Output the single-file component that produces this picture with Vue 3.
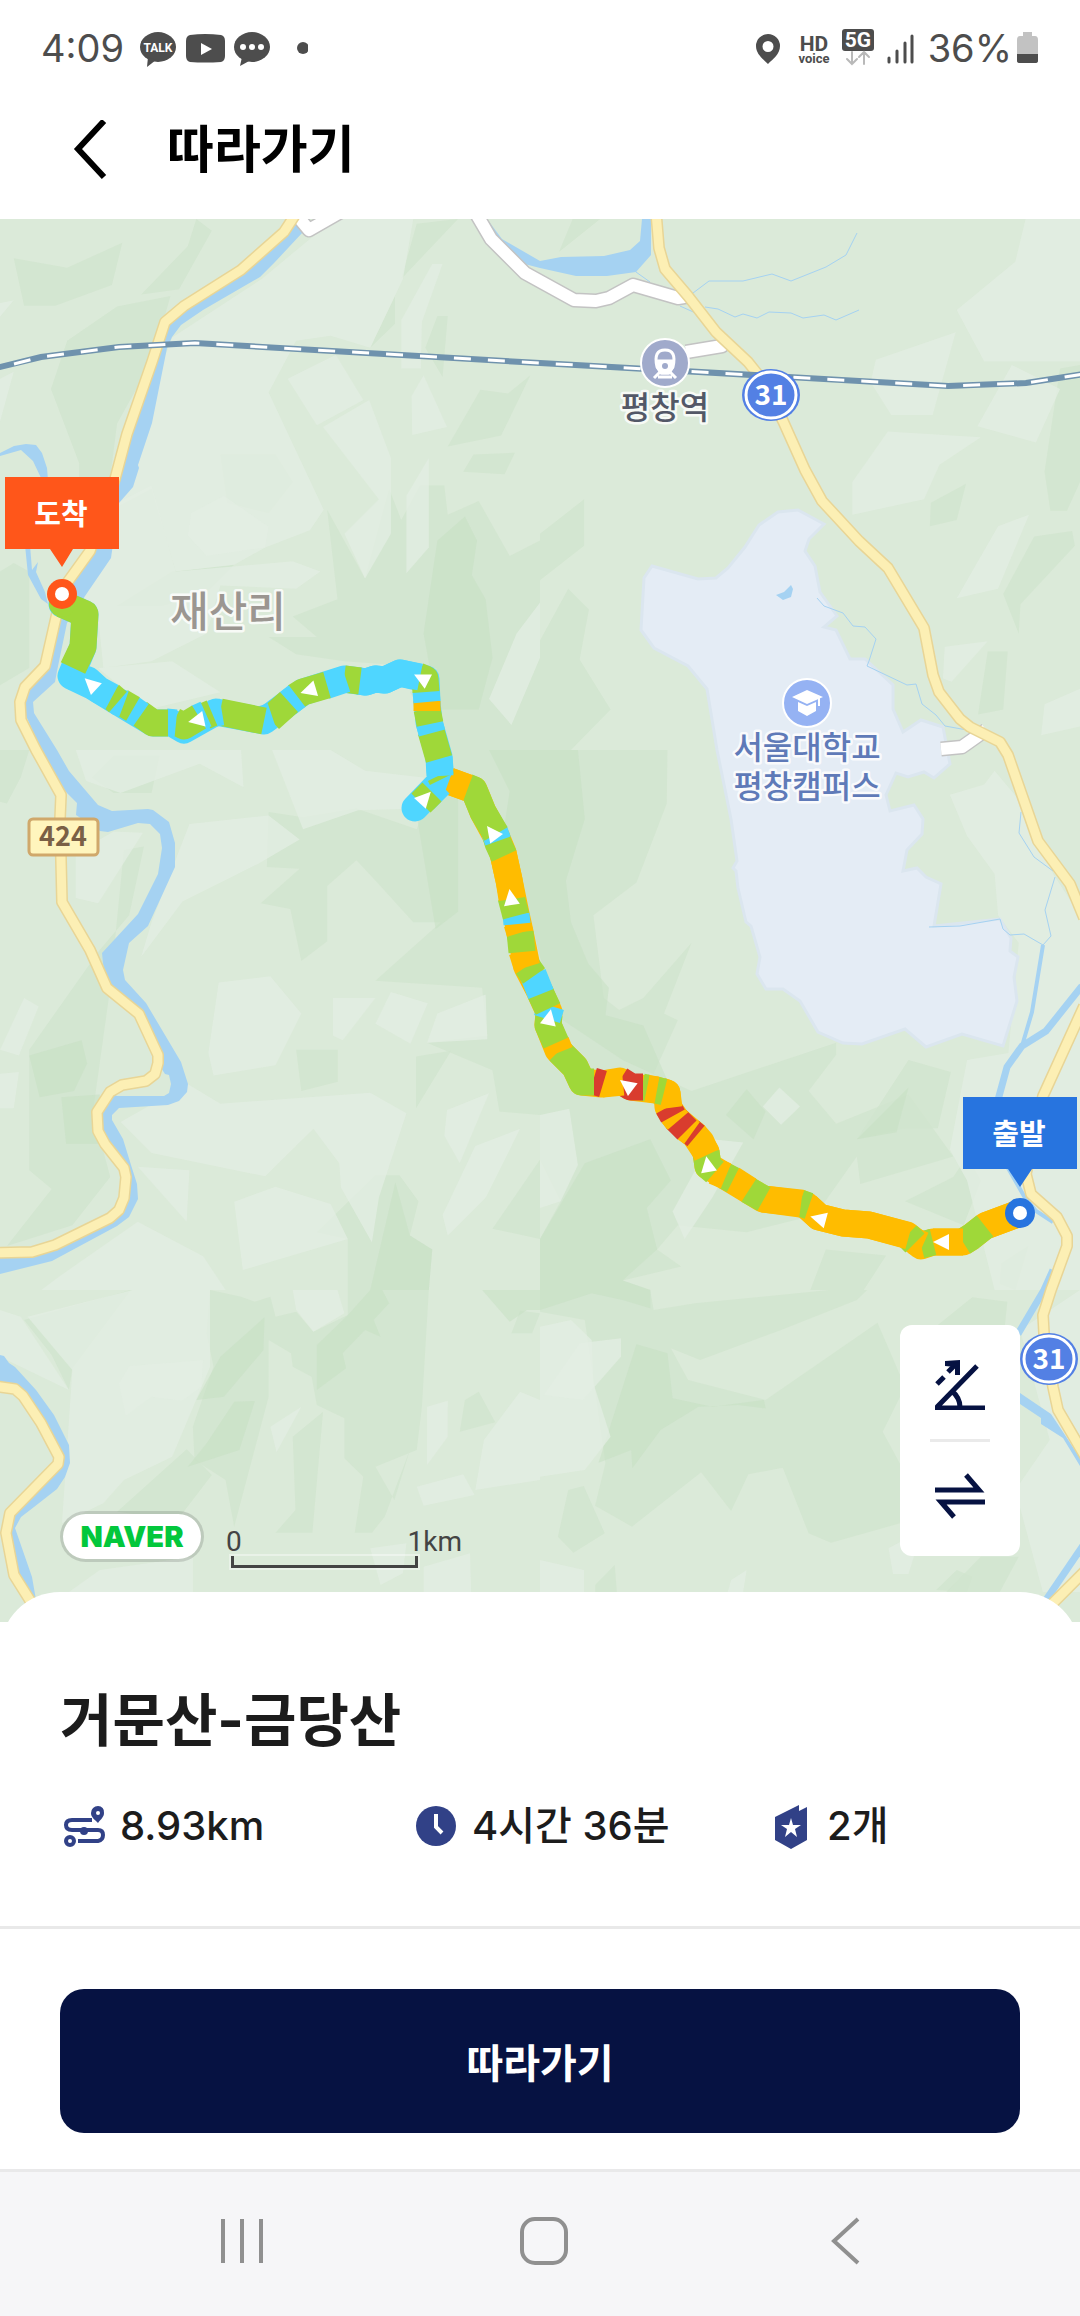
<script setup>
const colors = { g: '#9fd839', b: '#4fd6ff', o: '#ffbc00', r: '#d93c2e' }

// Slope-coloured sections of the course, from the start to the finish.
const sections = [
  ['o', '1020,1213 985,1226'],
  ['g', '985,1226 971,1237 963,1242'],
  ['o', '963,1242 933,1242'],
  ['g', '933,1242 921,1245'],
  ['o', '923,1245 914,1241'],
  ['g', '915,1243 907,1235'],
  ['o', '909,1236 869,1225 843,1223 819,1217 807,1206'],
  ['g', '809,1206 800,1203'],
  ['o', '801,1204 763,1199'],
  ['g', '764,1199 748,1190'],
  ['o', '749,1190 732,1179'],
  ['g', '733,1180 725,1176'],
  ['o', '726,1176 714,1171'],
  ['g', '715,1172 708,1166 706,1152'],
  ['o', '707,1155 701,1142 694,1134'],
  ['r', '696,1136 690,1131'],
  ['o', '692,1133 685,1128'],
  ['r', '687,1130 676,1119'],
  ['o', '678,1121 672,1114'],
  ['r', '673,1116 668,1107'],
  ['o', '669,1108 667,1093 661,1091'],
  ['g', '664,1092 656,1090'],
  ['o', '657,1090 646,1088'],
  ['g', '647,1088 642,1087'],
  ['r', '643,1087 631,1087 620,1080'],
  ['o', '623,1082 602,1084'],
  ['r', '603,1084 593,1081'],
  ['g', '594,1082 582,1082 575,1067 559,1051'],
  ['o', '560,1052 556,1042'],
  ['g', '556,1043 548,1025 549,1015'],
  ['b', '547,1019 551,1006'],
  ['g', '548,1009 540,992'],
  ['b', '541,994 533,974'],
  ['g', '534,976 527,966'],
  ['o', '527,967 522,951'],
  ['g', '522,952 520,932'],
  ['o', '520,933 517,923'],
  ['b', '517,924 516,914'],
  ['g', '516,916 511,897'],
  ['o', '512,899 509,880 503,853'],
  ['g', '504,856 498,843 496,836'],
  ['b', '498,841 494,830'],
  ['g', '496,834 483,812 474,790 467,787'],
  ['o', '468,788 449,781'],
  ['b', '440,784 424,800'],
  ['g', '442,779 440,775'],
  ['g', '432,792 421,803'],
  ['b', '440,776 439,757'],
  ['g', '439,759 431,731'],
  ['b', '432,733 429,722'],
  ['g', '430,724 427,709'],
  ['o', '427,711 427,701'],
  ['b', '427,702 426,691'],
  ['g', '426,692 425,679 418,676'],
  ['b', '420,677 400,673 385,680 375,679 366,682 358,681'],
  ['g', '360,681 344,679'],
  ['b', '346,679 325,686'],
  ['g', '327,685 303,692 295,697'],
  ['b', '297,696 288,703'],
  ['g', '289,702 270,719'],
  ['b', '272,716 260,720'],
  ['g', '264,721 220,712'],
  ['b', '222,712 210,714'],
  ['g', '212,713 205,716'],
  ['b', '206,714 197,718'],
  ['g', '199,717 184,726 174,721'],
  ['b', '176,723 166,722'],
  ['g', '168,723 153,723 139,713'],
  ['b', '141,715 131,708'],
  ['g', '133,709 121,702'],
  ['b', '124,704 116,701'],
  ['g', '118,702 110,695'],
  ['b', '112,697 99,690 88,680 71,676'],
  ['g', '73,668 83,647 85,614 62,604']
]

const trail =
  '1020,1213 985,1226 971,1237 963,1242 933,1242 921,1246 907,1235 869,1225 843,1223 819,1217 807,1206 800,1203 763,1199 725,1176 708,1166 706,1152 694,1134 676,1119 668,1107 667,1093 656,1090 631,1087 620,1081 602,1084 582,1082 575,1067 558,1050 548,1025 549,1012 539,990 527,967 520,932 516,914 509,880 503,853 496,836 483,812 474,790 449,781'
const upper =
  '415,808 441,781 439,757 429,722 427,702 426,679 400,673 385,680 375,679 366,682 344,679 303,692 264,721 216,712 184,730 172,723 153,723 118,702 92,686 71,676 83,647 85,614 62,604'

const arrows = [
  [92, 685, -47], [198, 720, -102], [310, 690, -107], [423, 679, -63],
  [424, 799, 43], [493, 834, -37], [511, 899, -9], [549, 1019, 11],
  [628, 1086, -53], [708, 1166, -10], [820, 1219, -75], [943, 1242, -90]
]

const yellowRoads = [
  '297,212 284,232 241,270 184,306 165,322 152,362 127,434 115,479 90,551 64,587 57,613 45,666 25,687 20,702 21,720 36,750 61,795 60,819 62,902 90,950 107,988 139,1014 158,1055 158,1063 155,1074 146,1081 122,1085 110,1092 97,1112 98,1131 105,1144 124,1168 126,1177 124,1198 119,1210 110,1218 55,1245 32,1252 -6,1253',
  '-6,1386 15,1389 23,1396 41,1423 59,1457 58,1464 10,1513 6,1533 14,1575 31,1602 44,1626',
  '656,212 659,248 665,269 688,296 716,332 748,362 764,382 783,421 805,470 822,501 859,541 888,568 924,628 933,675 939,692 960,719 970,727 1000,742 1008,755 1038,841 1070,884 1084,918',
  '1084,1006 1043,1096 1026,1174 1031,1194 1057,1217 1067,1236 1067,1246 1051,1290 1043,1315 1044,1333 1053,1387 1058,1410 1086,1458',
  '1086,1570 1053,1603 1030,1628'
]
const whiteRoads = [
  '299,218 309,230 344,210',
  '474,210 491,239 525,273 574,300 596,301 609,298 633,285 678,298 690,296',
  '686,352 722,346 730,340',
  '941,749 962,747 986,730'
]
const streams = [
  '636,272 650,282', '693,293 709,281 743,281 772,274 791,281 826,267 846,255 857,233',
  '680,306 700,315', '705,307 718,309 735,317 743,314 757,318 769,312 791,313 803,318 824,315 836,320 859,310',
  '817,598 824,606 843,613 853,626 865,627 876,639 869,661 867,666 907,685 916,684 922,704 936,715 945,726 967,730',
  '929,927 960,926 1000,919 1003,929 1010,935 1024,934 1043,945 1051,936 1045,910 1055,877',
  '1021,812 1019,833 1034,857 1053,871'
]

// Terrain shading, one group for each map tile.
const tiles = [
  {
    at: 'translate(0 210) scale(.3444)',
    light: [
      '905,80 990,26 1200,26 1170,200 1075,400 960,365 860,380 780,530 940,870 900,930 770,980 680,1030 510,1050 440,810 345,860 450,500 500,370 760,200',
      '240,1120 340,850 440,800 510,1050 850,1020 930,1050 860,1100 640,1090 600,1230 440,1310 300,1330 285,1180',
      '835,490 975,420 1055,552 920,625', '938,630 1072,552 1135,720 1135,940 1060,1070 1000,940 1100,840',
      '1195,540 1230,480 1298,630 1197,653', '1165,320 1255,157 1285,157 1225,325 1222,460 1165,460',
      '1180,830 1245,720 1245,980 1180,1055', '555,880 650,830 780,920 770,980 600,1005 545,945',
      '0,270 40,262 0,310', '0,490 40,470 0,615', '285,1330 500,1310 640,1400 430,1450',
      '1420,1420 1500,1230 1568,1140 1568,1300 1485,1495'
    ],
    dark: [
      '40,140 195,168 355,95 325,218 160,278 70,278', '495,250 340,280 195,380 148,520 230,735 230,775 320,775 340,620 440,440',
      '570,26 615,60 520,230 410,245 545,105', '1210,40 1330,26 1165,200', '1147,250 1147,330 1075,400',
      '1395,522 1475,533 1540,480 1455,655 1300,687', '1375,710 1495,705 1465,767 1345,760', '1270,308 1300,308 1285,485 1235,400',
      '950,870 1060,1070 1130,810 1165,900 1220,800 1290,800 1300,885 1390,845 1480,1005 1568,960 1568,1568 1300,1568 1190,1400 1270,1330 1000,1310 860,1290 780,1240 920,1240 850,1180 980,1130',
      '0,1050 40,1025 85,1050 85,1330 0,1380', '640,710 800,710 850,790 780,880 660,850', '340,1150 500,1050 680,1030 600,1110 470,1150'
    ],
    deep: ['1350,890 1385,960 1370,1060 1410,1130 1430,1300 1390,1450 1270,1450 1230,1230 1270,960']
  },
  {
    at: 'translate(540 210) scale(.3444)',
    light: [
      '1410,26 1568,26 1568,440 1290,440 1210,290 1380,150', '975,435 1207,355 1140,595 1020,595 960,500',
      '1010,643 1280,660 1160,740 1115,840 907,885 907,790', '1330,918 1420,885 1330,1100 1210,1127',
      '1370,450 1510,520 1440,675 1270,628', '1175,1268 1300,1252 1195,1370 1170,1360', '1465,1435 1568,1390 1568,1500 1455,1525'
    ],
    dark: [
      '95,26 175,26 55,122', '0,940 128,840 128,975 0,1075', '82,1100 142,1160 115,1305 205,1450 90,1568 0,1568 0,1250',
      '1135,850 1237,795 1210,900 1132,918', '1435,948 1545,932 1553,975 1395,1145 1390,1230 1345,1115',
      '1510,460 1568,450 1568,790 1530,873 1482,873 1465,760', '1300,1282 1358,1282 1345,1450 1272,1465'
    ],
    deep: []
  },
  {
    at: 'translate(0 750) scale(.3444)',
    light: [
      '220,300 330,237 415,240 285,445 220,430', '550,215 780,190 870,260 750,330 530,440 410,600 440,500', '635,675 785,657 875,765 800,915 620,945 605,880',
      '967,720 1090,720 995,843 967,830', '1135,703 1242,735 1192,853 1090,795', '545,970 640,1027 1075,995 1180,1055 1100,1300 1080,1430 990,1270 985,1200 910,1100 770,1238 440,1170 350,1080',
      '680,1312 800,1268 960,1318 1010,1420 705,1510', '1298,1045 1420,997 1335,1200 1290,1120', '1270,765 1410,710 1415,840 1240,850',
      '70,720 112,745 55,887 0,870', '0,940 55,935 40,1040 0,1040', '220,0 700,0 707,108 580,40 350,125 250,90',
      '790,0 960,0 1060,60 1230,80 1225,170 1040,175 880,230', '400,1210 550,1220 542,1370', '170,1530 400,1370 590,1470 655,1568 120,1568', '1380,1150 1510,1100 1410,1300 1300,1410 1285,1350'
    ],
    dark: [
      '330,17 463,17 440,125 330,125 267,80', '0,0 85,0 60,80 20,155 0,150', '360,290 418,280 375,480 290,580 85,870 85,1220 150,1275 20,1440 210,1380 320,1240 270,1050 320,690',
      '780,180 880,195 1035,170 1210,230 1300,0 1568,0 1568,1060 1450,1050 1430,930 1240,850 1415,830 1400,690 1090,670 1280,500 1200,500 1100,390 1035,320 950,395 950,555 875,613 843,462 757,445 870,345 775,340',
      '860,870 981,870 981,963 875,990', '1208,890 1310,873 1208,1040', '1568,1190 1430,1390 1568,1420',
      '1090,1235 1160,1235 1215,1310 1190,1410 1255,1450 1245,1568 1010,1568 1010,1420 920,1400'
    ],
    deep: ['1420,0 1568,0 1568,600 1520,400 1460,250 1480,120', '1210,190 1330,70 1330,470 1265,520', '85,887 237,843 253,910 215,990 115,1008', '178,1008 290,1000 290,1143 192,1143', '1148,1255 1190,1410 1255,1450 1245,1568 1075,1568']
  },
  {
    at: 'translate(540 750) scale(.3444)',
    light: [
      '1190,130 1290,100 1320,60 1420,180 1490,360 1568,480 1568,1568 1320,1568 1240,1250 1190,1160 1240,900 1360,880 1390,560 1330,480 1320,360 1240,250',
      '695,980 755,1035 700,1088 647,1035', '0,1060 85,1042 110,1205 60,1310 0,1330', '500,1130 590,1140 500,1300 420,1420 385,1340'
    ],
    dark: [
      '0,0 370,0 368,155 280,385 155,480 185,720 230,755 300,720 440,560 360,765 400,785 330,940 440,990 860,850 860,885 780,990 860,1085 1070,1000 1200,1180 930,1260 920,1180 800,1350 600,1400 400,1380 340,1450 410,1500 240,1540 320,1568 0,1568 0,1420 60,1310 0,1190',
      '1070,900 1193,935 1155,1098 1060,1098 920,1130', '1200,1240 1240,1180 1280,1250 1230,1380 1060,1310', '830,1450 1005,1468 940,1568 785,1568', '1340,1490 1418,1440 1380,1568 1335,1550'
    ],
    deep: [
      '0,0 110,0 130,200 75,380 90,500 140,620 200,690 190,770 300,800 370,960 240,900 60,780 0,600', '600,985 655,1050 620,1130 540,1060',
      '1070,980 1035,1110 920,1130', '0,1420 130,1200 320,1130 380,1250 310,1330 340,1450 240,1540 320,1568 0,1568'
    ]
  },
  {
    at: 'translate(0 1290) scale(.3444 .3333)',
    light: [
      '80,80 385,0 610,0 610,230 500,500 360,570 300,640 180,700 210,240', '375,228 590,210 585,290 528,333 440,320 365,378 345,280', '785,410 875,350 803,487',
      '1510,305 1568,330 1568,570 1380,600 1405,450', '1240,350 1300,332 1300,440 1240,525', '1210,590 1345,553 1378,615 1230,647', '1075,775 1180,760 1170,850 1105,885',
      '200,906 290,840 560,800 560,906', '1230,830 1365,790 1368,906 1230,906', '850,0 980,0 1000,70 910,125 860,60', '0,60 60,80 200,300 0,200'
    ],
    dark: [
      '610,0 700,20 740,35 785,20 800,80 860,65 910,125 1010,75 1010,0 1245,0 1225,350 1210,480 1090,530 1145,630 1190,480 1117,680 1080,728 1030,728 1055,560 1000,505 1000,385 920,345 905,260 850,230 845,190 780,150 780,320 680,710 655,570 565,510 560,410 620,230 600,130',
      '542,478 615,555 515,690 340,665', '850,440 938,365 907,728 800,728 858,660', '1390,305 1438,397 1335,425 1350,330', '70,90 380,0 210,235 200,300 150,195', '1485,130 1510,62 1568,70 1545,130'
    ],
    deep: [
      '1010,75 1075,0 1110,0 1130,40 1085,90 1105,140 1060,120 995,190 1005,235 920,300 920,165', '768,82 765,180 650,320 570,330 640,200', '680,335 740,333 695,480 545,530 600,460', '1400,0 1568,0 1568,60 1530,60 1480,95'
    ]
  },
  {
    at: 'translate(540 1290) scale(.3444 .3333)',
    light: [
      '0,110 90,90 150,150 155,280 205,440 130,540 0,560', '115,160 235,145 235,200 125,330 10,315', '0,810 128,840 128,906 0,906',
      '1394,120 1568,0 1568,906 1460,906 1380,600 1480,450', '1012,775 1110,720 1070,852 1025,852', '555,870 600,840 590,906 545,906'
    ],
    dark: [
      '0,0 320,0 330,60 450,40 840,0 950,0 920,30 700,120 465,210 380,175 430,270 655,330 980,98 1060,290 995,425 1050,530 1045,700 845,758 780,730 705,533 605,553 555,663 468,547 267,710 160,647 190,520 160,300 130,90 0,65',
      '82,600 127,588 188,730 97,788 52,740', '160,885 217,825 223,906 160,906', '1155,105 1255,22 1357,35 1350,105', '1210,840 1255,860 1240,906 1150,900', '1280,800 1390,800 1335,906 1180,906'
    ],
    deep: [
      '280,163 370,190 385,325 500,350 650,330 655,355 575,345 460,350 350,420 268,535 265,480 170,518', '0,0 320,0 320,55 240,30 150,10 0,60'
    ]
  }
]
</script>

<template>
  <div class="page">
    <div class="status">
      <span class="status-text">4:09</span>
      <svg class="notices" width="170" height="40" viewBox="137 28 170 40" aria-hidden="true">
        <ellipse cx="157" cy="47" rx="18" ry="15" />
        <path d="M147 57 146 67 155 60z" />
        <text class="talk" x="157" y="52" text-anchor="middle">TALK</text>
        <path d="M189 35Q204 33 220 35 224 36 224 41V56Q224 61 220 62 204 63 189 62 185 61 185 56V41Q185 36 189 35z" />
        <path d="M200 43v12l11-6z" fill="#fff" />
        <ellipse cx="251" cy="47" rx="18" ry="15" />
        <path d="M241 57 239 66 250 60z" />
        <g fill="#fff"><circle cx="242" cy="47" r="3" /><circle cx="251" cy="47" r="3" /><circle cx="260" cy="47" r="3" /></g>
        <circle cx="302" cy="48" r="6" />
      </svg>
      <svg class="signals" width="162" height="40" viewBox="752 28 162 40" aria-hidden="true">
        <path fill-rule="evenodd" d="M766 34a12 12 0 0 1 12 12c0 8-7 13-12 18-5-5-12-10-12-18a12 12 0 0 1 12-12zm0 7a5 5 0 1 0 0 11 5 5 0 0 0 0-11z" />
        <text class="hd" x="812" y="51" text-anchor="middle">HD</text>
        <text class="voice" x="812" y="63" text-anchor="middle">voice</text>
        <rect x="840" y="29" width="32" height="22" rx="3" />
        <text class="five" x="856" y="47" text-anchor="middle">5G</text>
        <g fill="none" stroke="#b9b9b9" stroke-width="2" stroke-linecap="round">
          <path d="M850 52v12m-5-5 5 5 5-5M862 64V52m-5 5 5-5 5 5" />
        </g>
        <g stroke="#4d4d4d" stroke-width="3" stroke-linecap="round">
          <path d="M887 58v4M895 51v11M903 43v19M910 36v26" />
        </g>
      </svg>
      <span class="status-text">36%</span>
      <svg class="battery" width="22" height="32" viewBox="0 0 22 32" aria-hidden="true">
        <path d="M6 0h9v4h3q3 0 3 4v14H0V8q0-4 3-4h3z" fill="#c2c2c2" />
        <path d="M0 22h21v7q0 2-3 2H3q-3 0-3-2z" />
      </svg>
    </div>

    <header class="bar">
      <button class="back" type="button" aria-label="뒤로">
        <svg width="34" height="60" viewBox="0 2 34 60"><path d="M31 3 5 31l26 28" fill="none" stroke="#000" stroke-width="6" /></svg>
      </button>
      <h1>따라가기</h1>
    </header>

    <main class="map">
      <svg class="canvas" viewBox="0 219 1080 1403" preserveAspectRatio="xMidYMid slice" role="img" aria-label="코스 지도">
        <rect y="219" width="1080" height="1403" fill="#dbead9" />
        <g v-for="(tile, i) in tiles" :key="i" :transform="tile.at">
          <polygon v-for="(p, n) in tile.dark" :key="'d' + n" :points="p" class="dark" />
          <polygon v-for="(p, n) in tile.deep" :key="'p' + n" :points="p" class="deep" />
          <polygon v-for="(p, n) in tile.light" :key="'l' + n" :points="p" class="light" />
        </g>

        <polygon class="campus" points="652,566 698,579 716,578 728,568 745,547 759,525 778,512 798,510 824,524 809,539 805,551 815,566 820,592 837,616 824,627 836,630 850,659 865,659 893,685 893,709 903,732 921,720 943,727 950,764 934,778 924,772 908,777 896,773 886,795 890,811 914,805 923,819 922,834 907,850 903,871 917,868 926,877 941,884 934,926 1000,919 1011,938 1010,951 1018,957 1014,977 1017,1001 1003,1046 962,1034 926,1047 905,1029 862,1044 843,1043 818,1032 800,1001 783,989 766,989 757,974 760,957 751,926 746,922 738,888 736,871 733,868 737,861 731,819 717,750 707,689 688,666 654,648 641,630 644,578" />

        <g fill="#a5d2f2">
          <polygon points="310,219 303,232 275,262 260,277 203,310 181,325 172,337 167,348 152,423 138,465 139,468 133,487 119,503 111,558 83,599 67,623 57,671 55,682 33,702 34,713 57,750 69,771 98,805 112,811 148,809 153,810 169,822 175,843 175,867 148,926 129,943 123,970 125,980 146,1003 181,1062 188,1084 187,1092 179,1101 168,1105 119,1108 112,1115 112,1120 123,1139 131,1165 137,1184 138,1199 129,1217 117,1226 52,1261 0,1274 0,1253 32,1252 55,1245 110,1218 124,1198 126,1177 98,1131 97,1112 110,1092 117,1096 164,1096 169,1093 171,1084 169,1075 165,1074 158,1063 139,1014 107,988 103,963 102,953 138,914 158,874 162,848 160,834 150,824 138,823 108,832 100,831 76,815 77,803 65,791 41,750 20,702 45,666 57,613 64,585 90,551 115,479 165,322 184,306 241,270 284,232 294,219" />
          <polygon points="0,453 14,446 26,444 36,445 42,453 47,468 48,480 42,480 33,461 21,450 0,456" />
          <polygon points="25,545 28,575 41,599 48,604 45,592 36,572 38,562 32,570 30,545" />
          <polygon points="487,219 502,239 540,261 561,257 604,256 630,250 640,241 642,219 651,219 651,255 636,272 607,276 576,276 540,268 517,262 496,239" />
          <polygon points="0,1355 4,1356 9,1363 15,1367 36,1390 54,1415 69,1445 70,1463 65,1477 57,1489 34,1507 21,1517 15,1528 32,1577 36,1600 14,1575 6,1533 10,1513 58,1464 23,1396 0,1387" />
          <polygon points="1020,1393 1051,1414 1065,1435 1080,1458 1080,1466 1063,1438 1041,1424 1041,1418 1020,1404" />
          <polygon points="776,595 784,592 791,585 793,589 791,597 783,600" />
        </g>
        <g fill="none" stroke="#a5d2f2">
          <g stroke-width="7">
            <polyline points="1082,986 1046,1031 1022,1046 1007,1067 998,1100" />
            <polyline points="1053,1270 1044,1290 1018,1334" />
            <polyline points="1084,1544 1046,1600" />
          </g>
          <polyline stroke-width="4" points="1043,945 1032,1012 1022,1046" />
          <polyline stroke-width="4" points="1008,1168 1024,1196 1036,1211 1053,1222" />
          <polyline v-for="s in streams" :key="s" stroke-width="1" :points="s" />
        </g>

        <g class="road">
          <polyline v-for="r in whiteRoads" :key="r" :points="r" stroke="#c3c3c3" stroke-width="15" />
          <polyline v-for="r in whiteRoads" :key="r + 'f'" :points="r" stroke="#fff" stroke-width="12" />
          <polyline v-for="r in yellowRoads" :key="r" :points="r" stroke="#e8d596" stroke-width="12" />
          <polyline v-for="r in yellowRoads" :key="r + 'f'" :points="r" stroke="#fcefb4" stroke-width="9" />
        </g>
        <g fill="none">
          <polyline points="-4,368 41,357 119,347 195,343 540,363 948,386 1026,383 1084,374" stroke="#6f92ad" stroke-width="6" />
          <polyline points="14,364 41,357 119,347 195,343 540,363 948,386 1026,383 1084,374" stroke="#fff" stroke-width="3" stroke-dasharray="17 17" />
        </g>

        <g class="track">
          <polyline :points="trail" :stroke="colors.o" />
          <polyline :points="upper" :stroke="colors.b" stroke-linecap="round" />
          <polyline v-for="(s, i) in sections" :key="i" :points="s[1]" :stroke="colors[s[0]]" />
          <circle cx="62" cy="604" r="13" :fill="colors.g" stroke="none" />
        </g>
        <path v-for="(a, i) in arrows" :key="i" d="M0-10 8 6H-8z" fill="#fff" :transform="`translate(${a[0]} ${a[1]}) rotate(${a[2]})`" />

        <text class="area" x="228" y="627" text-anchor="middle">재산리</text>
        <text class="station" x="665" y="419" text-anchor="middle">평창역</text>
        <g class="school">
          <text x="807" y="759" text-anchor="middle">서울대학교</text>
          <text x="807" y="798" text-anchor="middle">평창캠퍼스</text>
        </g>

        <circle cx="665" cy="363" r="24" fill="#a0aacb" stroke="#fff" stroke-width="2" />
        <g fill="none" stroke="#fff" stroke-width="3">
          <path d="M657 367q-4-17 8-17t8 17l-4 6h-8z" />
          <path d="M658 361h14v7l-4 5h-6l-4-5z" fill="#fff" />
          <path d="m660 372-6 6M670 372l6 6M658 377h14" />
        </g>
        <circle cx="665" cy="366" r="3" fill="#a0aacb" />

        <circle cx="807" cy="703" r="24" fill="#95b2f3" stroke="#fff" stroke-width="2" />
        <path d="m807 690 16 7-16 7-15-7zM798 702l9 4 9-4v9l-9 5-9-5zM818 698h2v8h-2z" fill="#fff" />

        <g v-for="s in [[771, 395], [1049, 1359]]" :key="s[0]" :transform="`translate(${s[0]} ${s[1]})`">
          <ellipse rx="29" ry="26" fill="#5380e4" />
          <ellipse rx="25" ry="23" fill="none" stroke="#fff" stroke-width="3" />
          <text class="route-no" y="10" text-anchor="middle">31</text>
        </g>

        <rect x="29" y="819" width="69" height="36" rx="4" fill="#fff5bd" stroke="#d0a86b" stroke-width="3" />
        <text class="local-no" x="63" y="846" text-anchor="middle">424</text>

        <g fill="#ff561a">
          <path d="M5 477h114v72H73l-11 18-12-18H5z" />
          <circle cx="62" cy="594" r="15" />
        </g>
        <circle cx="62" cy="594" r="7" fill="#fff" />
        <text class="pin" x="61" y="525" text-anchor="middle">도착</text>
        <g fill="#2774df">
          <path d="M963 1097h114v72h-45l-12 18-12-18h-45z" />
          <circle cx="1020" cy="1213" r="15" />
        </g>
        <circle cx="1020" cy="1213" r="7" fill="#fff" />
        <text class="pin" x="1019" y="1145" text-anchor="middle">출발</text>
      </svg>

      <div class="legend">
        <span class="naver">NAVER</span>
        <div class="scale">
          <div class="scale-text"><span>0</span><span>1km</span></div>
          <div class="scale-line"></div>
        </div>
      </div>

      <div class="tools">
        <button type="button" aria-label="경사도">
          <svg width="50" height="50" viewBox="0 0 50 50">
            <g fill="none" stroke="#061242" stroke-width="5">
              <path d="M0 48h50M2 47 42 6M17 31q8 7 8 16" />
              <path d="m2 24 7-7M13 12l8-8" />
            </g>
            <path d="M10 1 25 0v15h-5V7l-10-1z" fill="#061242" />
          </svg>
        </button>
        <hr />
        <button type="button" aria-label="방향 전환">
          <svg width="50" height="46" viewBox="0 0 50 46">
            <path d="M0 17h44L31 2M50 29H6l13 15" fill="none" stroke="#061242" stroke-width="5" />
          </svg>
        </button>
      </div>
    </main>

    <section class="sheet">
      <h2>거문산-금당산</h2>
      <ul class="stats">
        <li>
          <svg width="48" height="48" viewBox="0 0 48 48" aria-hidden="true">
            <g fill="none" stroke="#314187" stroke-width="4">
              <path d="M32 18H12q-6 0-6 5t6 5h26q5 0 5 5t-5 6H18" />
              <circle cx="10" cy="39" r="4" />
            </g>
            <g fill="#314187"><circle cx="24" cy="29" r="4" /><path fill-rule="evenodd" d="M38 4a6 6 0 0 1 6 7c0 4-3 6-6 10-4-4-7-6-7-10a7 7 0 0 1 7-7zm0 5a2 2 0 1 0 0 4 2 2 0 0 0 0-4z" /></g>
          </svg>
          8.93km
        </li>
        <li>
          <svg width="48" height="48" viewBox="0 0 48 48" aria-hidden="true">
            <circle cx="24" cy="24" r="20" fill="#314187" />
            <path d="M24 12v13l6 6" fill="none" stroke="#fff" stroke-width="4" />
          </svg>
          4시간 36분
        </li>
        <li>
          <svg width="48" height="48" viewBox="0 0 48 48" aria-hidden="true">
            <path d="M8 15 32 3v6l8-4v33l-16 9-16-9z" fill="#314187" />
            <path d="m24 16 2 7h8l-6 4 2 8-6-5-6 5 2-8-6-4h8z" fill="#fff" />
          </svg>
          2개
        </li>
      </ul>
    </section>

    <div class="action"><button type="button">따라가기</button></div>

    <nav class="system">
      <button type="button" aria-label="최근 앱">
        <svg width="48" height="48" viewBox="0 0 48 48"><path d="M5 2v44M24 2v44M43 2v44" /></svg>
      </button>
      <button type="button" aria-label="홈">
        <svg width="48" height="48" viewBox="0 0 48 48"><rect x="2" y="2" width="44" height="44" rx="13" /></svg>
      </button>
      <button type="button" aria-label="뒤로 가기">
        <svg width="48" height="48" viewBox="0 0 48 48"><path d="M36 2 12 24l24 22" /></svg>
      </button>
    </nav>
  </div>
</template>

<style>
body {
  margin: 0;
  background: #fff;
}
</style>

<style scoped>
.page {
  display: flex;
  flex-direction: column;
  min-height: 100vh;
  color: #1c1c1c;
  font-family: Inter, "Noto Sans CJK KR", sans-serif;
}
button {
  display: flex;
  align-items: center;
  justify-content: center;
  padding: 0;
  border: 0;
  background: none;
  font: inherit;
  cursor: pointer;
}
.status {
  display: flex;
  align-items: center;
  box-sizing: border-box;
  height: 80px;
  padding: 16px 41px 0;
  color: #4d4d4d;
  fill: #4d4d4d;
}
.status-text {
  font-size: 38px;
  line-height: 40px;
}
.notices {
  margin-left: 14px;
}
.signals {
  margin-left: auto;
  margin-right: 12px;
}
.battery {
  margin-left: 5px;
}
.talk {
  font: 700 12px Roboto, sans-serif;
  fill: #fff;
}
.hd {
  font: 700 21px Roboto, sans-serif;
}
.voice {
  font: 700 13px Roboto, sans-serif;
}
.five {
  font: 700 21px Roboto, sans-serif;
  fill: #fff;
}
.bar {
  display: flex;
  align-items: center;
  height: 139px;
  padding-left: 73px;
  gap: 60px;
  color: #000;
}
h1 {
  margin: 0;
  font-size: 51px;
  line-height: 64px;
  font-weight: 700;
}
.map {
  position: relative;
  flex: 1;
  min-height: 600px;
  overflow: hidden;
}
.canvas {
  position: absolute;
  inset: 0;
  width: 100%;
  height: 100%;
  font-family: "Noto Sans CJK KR", sans-serif;
}
.light { fill: #e3ede3; opacity: .75; }
.dark { fill: #d0e4ce; opacity: .75; }
.deep { fill: #c6e0c2; opacity: .5; }
.campus {
  fill: #e4ecf5;
  stroke: #dbe6ef;
  stroke-width: 3;
}
.road,
.track {
  fill: none;
  stroke-linejoin: round;
}
.track {
  stroke-width: 27;
}
.area,
.station,
.school {
  font-weight: 500;
  paint-order: stroke;
  stroke: #fffc;
  stroke-width: 5;
  stroke-linejoin: round;
}
.area {
  font-size: 42px;
  fill: #9b9691;
}
.station {
  font-size: 32px;
  fill: #535867;
}
.school {
  font-size: 32px;
  fill: #5f7ab8;
}
.route-no {
  font-size: 28px;
  font-weight: 700;
  fill: #fff;
}
.local-no {
  font-size: 27px;
  font-weight: 700;
  fill: #7a6045;
}
.pin {
  font-size: 29px;
  font-weight: 700;
  fill: #fff;
}
.legend {
  position: absolute;
  left: 60px;
  bottom: 54px;
  display: flex;
  align-items: flex-end;
  gap: 22px;
}
.naver {
  box-sizing: border-box;
  width: 144px;
  height: 51px;
  margin-bottom: 6px;
  border: 3px solid #0002;
  border-radius: 26px;
  background: #fff;
  background-clip: padding-box;
  color: #03c73c;
  font: 900 29px/45px Inter, sans-serif;
  text-align: center;
}
.scale {
  width: 236px;
  color: #444;
  font: 28px/28px Roboto, sans-serif;
}
.scale-text {
  display: flex;
  justify-content: space-between;
}
.scale-line {
  box-sizing: border-box;
  width: 187px;
  height: 12px;
  margin-left: 5px;
  border: solid #444;
  border-width: 0 3px 3px;
  box-shadow: 0 0 0 2px #fff6;
}
.tools {
  position: absolute;
  right: 60px;
  bottom: 66px;
  width: 120px;
  border-radius: 12px;
  background: #fff;
}
.tools button {
  box-sizing: border-box;
  width: 100%;
  height: 114px;
}
.tools button:first-child {
  padding-top: 6px;
}
.tools button:last-child {
  padding-bottom: 6px;
}
.tools hr {
  width: 60px;
  height: 3px;
  margin: 0 auto;
  border: 0;
  background: #eaeaea;
}
.sheet {
  position: relative;
  margin-top: -30px;
  padding: 97px 60px 76px;
  border-bottom: 3px solid #e9e9e9;
  border-radius: 60px 60px 0 0;
  background: #fff;
}
h2 {
  margin: 0;
  font-size: 57px;
  line-height: 64px;
  font-weight: 700;
}
.stats {
  display: grid;
  grid-template-columns: 352px 355px 1fr;
  margin: 49px 0 0;
  padding: 0;
  list-style: none;
  font-size: 40px;
  line-height: 48px;
  font-weight: 500;
}
.stats li {
  display: flex;
  align-items: center;
  gap: 12px;
}
.action {
  padding: 60px 60px 36px;
  border-bottom: 3px solid #e9e9ea;
}
.action button {
  width: 100%;
  height: 144px;
  border-radius: 24px;
  background: #061242;
  color: #fff;
  font-size: 40px;
  font-weight: 700;
}
.system {
  display: flex;
  align-items: center;
  justify-content: center;
  box-sizing: border-box;
  gap: 254px;
  height: 144px;
  padding: 0 0 6px 8px;
  background: #f6f6f8;
}
.system svg {
  fill: none;
  stroke: #909090;
  stroke-width: 4;
}
</style>
